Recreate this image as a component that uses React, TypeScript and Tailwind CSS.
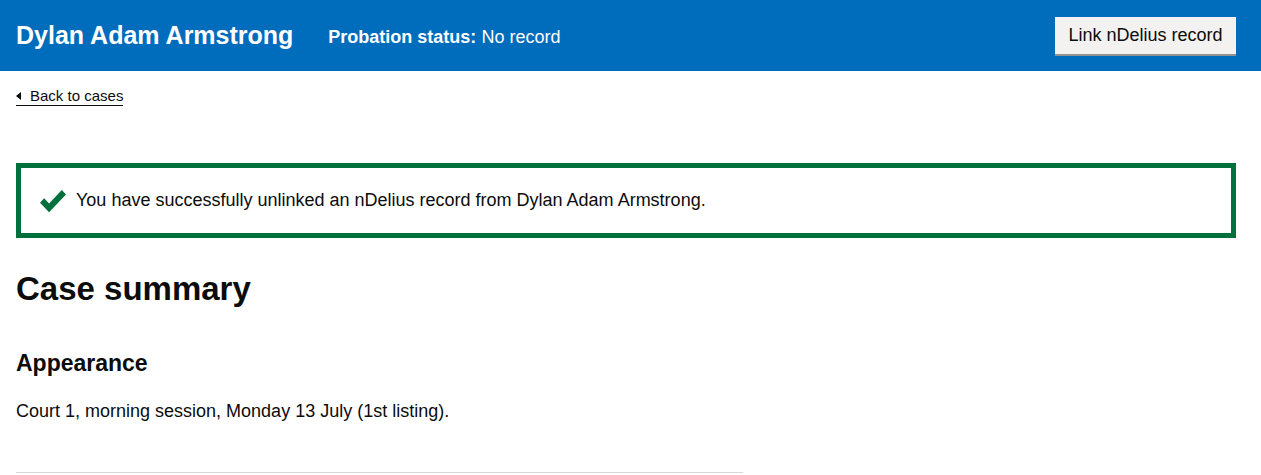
export default function App() {
  return (
    <div className="min-h-[475px] bg-white text-[#0b0c0c] font-['Liberation_Sans',Arial,sans-serif]">
      {/* header bar */}
      <header className="bg-[#006cbc] h-[71px] pl-4 pr-[25px] flex items-center">
        <h1 className="text-[25px] font-bold text-white leading-none">Dylan Adam Armstrong</h1>
        <p className="ml-[35px] text-[18px] text-white leading-none pt-[2px]">
          <span className="font-bold">Probation status:</span> No record
        </p>
        <button className="ml-auto h-[37px] w-[181px] bg-[#f3f2f1] text-[#0b0c0c] text-[18px] shadow-[0_2px_0_#929191] mb-[1px]">
          Link nDelius record
        </button>
      </header>

      <main className="pl-4 pr-[25px]">
        <a
          href="#"
          className="mt-[16px] inline-flex items-center gap-[9px] text-[15px] leading-[18px] text-[#0b0c0c] border-b border-[#0b0c0c]"
        >
          <span className="w-0 h-0 border-y-[4px] border-y-transparent border-r-[5px] border-r-[#0b0c0c]" />
          Back to cases
        </a>

        <div className="mt-[56px] border-[5px] border-[#00703c] h-[75px] flex items-center pl-[19px]">
          <svg viewBox="0 0 25 25" className="w-[26px] h-[26px] fill-[#00703c]">
            <path d="M25,6.2L8.7,23.2L0,14.1l4-4.2l4.7,4.9L21,2L25,6.2z" />
          </svg>
          <p className="ml-[10px] text-[18px]">You have successfully unlinked an nDelius record from Dylan Adam Armstrong.</p>
        </div>

        <h2 className="mt-[31px] text-[33px] font-bold leading-[40px]">Case summary</h2>

        <h3 className="mt-[40px] text-[23px] font-bold leading-[28px]">Appearance</h3>

        <p className="mt-[23px] text-[18px] leading-[22px]">Court 1, morning session, Monday 13 July (1st listing).</p>

        <hr className="mt-[50px] w-[727px] border-t border-[#d8d8d8]" />
      </main>
    </div>
  )
}
